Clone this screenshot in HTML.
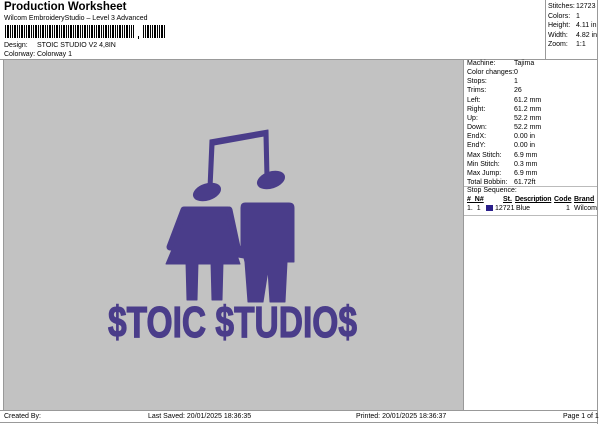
<!DOCTYPE html>
<html><head><meta charset="utf-8"><style>
*{margin:0;padding:0;box-sizing:border-box}
body{width:600px;height:424px;background:#fff;position:relative;overflow:hidden;font-family:"Liberation Sans",sans-serif;font-size:7px;color:#000}
.a{position:absolute;white-space:nowrap}
.l{position:absolute;background:#999}
</style></head><body>
<div class="a" style="left:4px;top:1px;font-size:11.5px;font-weight:bold">Production Worksheet</div>
<div class="a" style="left:4px;top:15px">Wilcom EmbroideryStudio – Level 3 Advanced</div>
<svg class="a" style="left:5px;top:25px" width="162" height="14">
<defs><pattern id="bc" width="7" height="14" patternUnits="userSpaceOnUse"><rect x="0" width="1" height="13" fill="#000"/><rect x="2" width="2" height="13" fill="#000"/><rect x="5" width="1" height="13" fill="#000"/></pattern></defs>
<rect x="0" y="0" width="129" height="13" fill="url(#bc)"/>
<rect x="133" y="11" width="1" height="3" fill="#000"/>
<rect x="137" y="0" width="24" height="13" fill="url(#bc)"/>
</svg>
<div class="a" style="left:4px;top:42px">Design:</div>
<div class="a" style="left:37px;top:42px">STOIC STUDIO V2 4,8IN</div>
<div class="a" style="left:4px;top:51px">Colorway:</div>
<div class="a" style="left:37px;top:51px">Colorway 1</div>

<div class="l" style="left:545px;top:0;width:1px;height:60px"></div>
<div class="l" style="left:597px;top:0;width:1px;height:424px"></div>
<div class="a" style="left:548px;top:2px;line-height:9.5px">Stitches:<br>Colors:<br>Height:<br>Width:<br>Zoom:</div>
<div class="a" style="left:576px;top:2px;line-height:9.5px">12723<br>1<br>4.11 in<br>4.82 in<br>1:1</div>

<div class="l" style="left:0;top:59px;width:598px;height:1px"></div>
<div class="a" style="left:3px;top:60px;width:460px;height:351px;background:#c2c2c2;border-left:1px solid #999"></div>
<div class="l" style="left:463px;top:60px;width:1px;height:351px"></div>

<div class="a" style="left:467px;top:59px;line-height:9.15px">Machine:<br>Color changes:<br>Stops:<br>Trims:<br>Left:<br>Right:<br>Up:<br>Down:<br>EndX:<br>EndY:<br>Max Stitch:<br>Min Stitch:<br>Max Jump:<br>Total Bobbin:</div>
<div class="a" style="left:514px;top:59px;line-height:9.15px">Tajima<br>0<br>1<br>26<br>61.2 mm<br>61.2 mm<br>52.2 mm<br>52.2 mm<br>0.00 in<br>0.00 in<br>6.9 mm<br>0.3 mm<br>6.9 mm<br>61.72ft</div>
<div class="l" style="left:464px;top:186px;width:133px;height:1px;background:#bbb"></div>
<div class="a" style="left:467px;top:187px">Stop Sequence:</div>
<div class="a" style="left:467px;top:196px;font-weight:bold;text-decoration:underline">#&nbsp;&nbsp;N#</div>
<div class="a" style="left:503px;top:196px;font-weight:bold;text-decoration:underline">St.</div>
<div class="a" style="left:515px;top:196px;font-weight:bold;text-decoration:underline;letter-spacing:-0.2px">Description</div>
<div class="a" style="left:554px;top:196px;font-weight:bold;text-decoration:underline">Code</div>
<div class="a" style="left:574px;top:196px;font-weight:bold;text-decoration:underline">Brand</div>
<div class="a" style="left:467px;top:205px">1.&nbsp;&nbsp;1</div>
<div class="a" style="left:486px;top:205px;width:7px;height:6px;background:#2a1f8a"></div>
<div class="a" style="left:495px;top:205px">12721</div>
<div class="a" style="left:516px;top:205px">Blue</div>
<div class="a" style="left:566px;top:205px">1</div>
<div class="a" style="left:574px;top:205px">Wilcom</div>
<div class="l" style="left:464px;top:215px;width:133px;height:1px;background:#bbb"></div>

<svg class="a" style="left:0;top:0" width="600" height="424">
<g fill="#4a3d8a" stroke="#4a3d8a" stroke-linejoin="round">
<path d="M208 188 L210 140 L268 130 L269 178 L265 178 L264 136 L214 145 L212 188Z" stroke-width="1"/>
<ellipse cx="207" cy="192" rx="14" ry="8" transform="rotate(-18 207 192)"/>
<ellipse cx="271" cy="180" rx="14" ry="8" transform="rotate(-18 271 180)"/>
<!-- girl -->
<path d="M184 207 L228 207 L232 240 L240 264 L166 264 L176 240Z" stroke-width="1"/>
<path d="M184 210 L170 247" stroke-width="7" stroke-linecap="round" fill="none"/>
<path d="M229 210 L238 252" stroke-width="7" stroke-linecap="round" fill="none"/>
<path d="M186 262 L198 262 L197 300 L187 300Z M211 262 L223 262 L222 300 L212 300Z" stroke-width="1"/>
<!-- boy -->
<path d="M245 203 L289 203 Q294 203 294 208 L294 262 L287 262 L285 302 L270 302 L268 270 L263 302 L248 302 L245 262 L244 258 L238 257 L237 250 L241 246 L241 208 Q241 203 245 203Z" stroke-width="1"/>
</g>
<text x="108" y="337" font-family="Liberation Sans Narrow, Liberation Sans, sans-serif" font-weight="bold" font-size="44" fill="#4a3d8a" stroke="#4a3d8a" stroke-width="1.2" textLength="249" lengthAdjust="spacingAndGlyphs">$TOIC $TUDIO$</text>
</svg>

<div class="l" style="left:0;top:410px;width:598px;height:1px"></div>
<div class="l" style="left:0;top:422px;width:598px;height:1px"></div>
<div class="a" style="left:4px;top:413px">Created By:</div>
<div class="a" style="left:148px;top:413px">Last Saved: 20/01/2025 18:36:35</div>
<div class="a" style="left:356px;top:413px">Printed: 20/01/2025 18:36:37</div>
<div class="a" style="left:563px;top:413px">Page 1 of 1</div>
</body></html>
